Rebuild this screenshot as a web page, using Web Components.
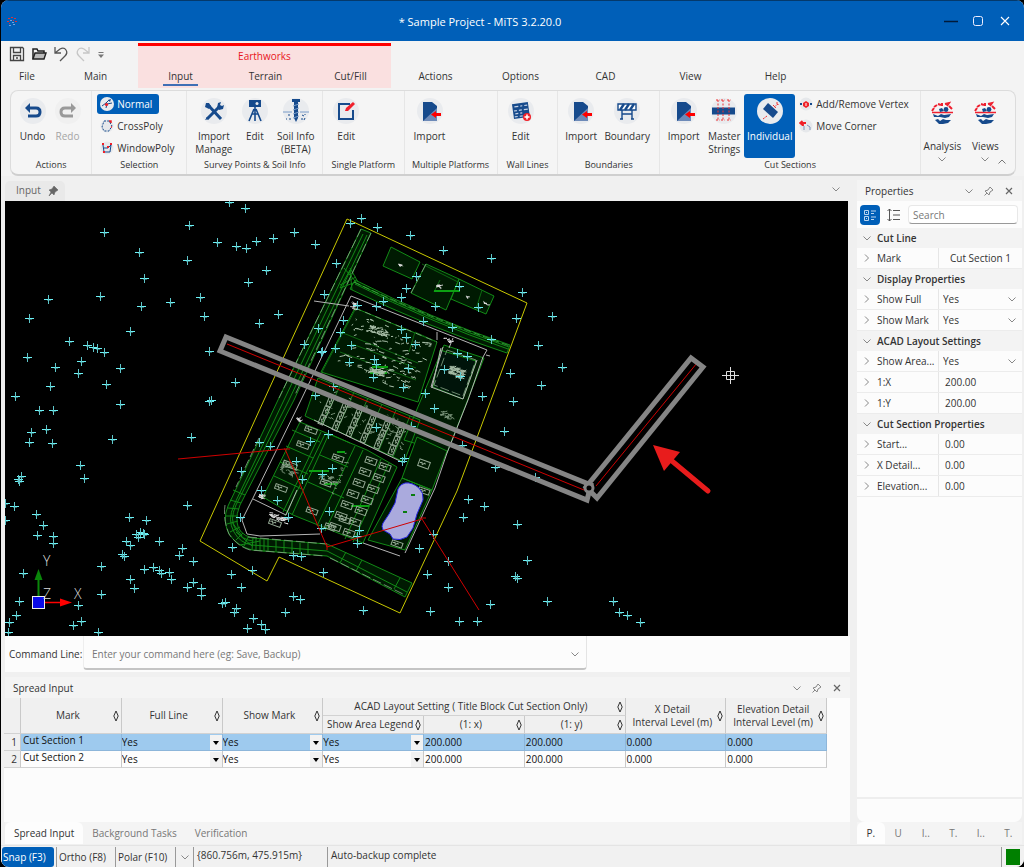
<!DOCTYPE html>
<html lang="en">
<head>
<meta charset="utf-8">
<title>Sample Project - MiTS 3.2.20.0</title>
<style>
html, body { margin: 0; height: 100%; background: #000; }
body { font: 10px/13px "Open Sans", "Noto Sans", sans-serif; color: #333; }
</style>
</head>
<body>
<mits-app></mits-app>
<script>
const BASE = `*,*::before,*::after{box-sizing:border-box}
button,input,select{font:inherit;color:inherit;border:0;background:none;padding:0;margin:0}
button{cursor:default}
a{color:inherit;text-decoration:none}
select{appearance:none;cursor:default}`;

function define(name, css, html, after) {
  customElements.define(name, class extends HTMLElement {
    constructor() {
      super();
      this.attachShadow({ mode: 'open' });
    }
    connectedCallback() {
      if (this.shadowRoot.childNodes.length) return;
      this.shadowRoot.innerHTML = `<style>${BASE}${css}</style>` + (typeof html === 'function' ? html(this) : html);
      if (after) after(this.shadowRoot, this);
    }
  });
}

/* ---------- icons ---------- */
const NAVY = '#164a8c';
const docIcon = `<path d="M6 4h9l5 4v15H6z" fill="${NAVY}"/><path d="M6 23L20 10v13z" fill="#6d8ab8"/><path d="M14 16.5l5-3.5v2h5v3h-5v2z" fill="red"/>`;
const logo = `<g fill="none" stroke="#ee2030"><path d="M3 11l2-3M5 7l3-2M9 4l3 1M13 3v3M16 4l4-1-2 3M20 6l3 3" stroke-width="2"/><path d="M3 12.500h21" stroke-width="1.400"/></g><g fill="${NAVY}"><circle cx="17" cy="9.500" r="2.400"/><path d="M10 9l3-1 2 3-4 1zM4 14l5 2 3-2 3 1 7-1-2 3-4 1-5-1-6 0zM6 20l3-1 2 2 3-2 3 1h5l-3 3-5 1-4 0z"/></g>`;
const ICONS = {
  undo: [26, `<path d="M8 10h8q4 0 4 4t-4 4H8" fill="none" stroke="${NAVY}" stroke-width="3"/><path d="M5 10l5-5v10z" fill="${NAVY}"/>`],
  redo: [26, `<path d="M18 10h-8q-4 0-4 4t4 4h8" fill="none" stroke="#999" stroke-width="3"/><path d="M21 10l-5-5v10z" fill="#999"/>`],
  tools: [26, `<path d="M6 21L18 9M20 21L8 8" stroke="${NAVY}" stroke-width="3" fill="none"/><path d="M5 5l3 0 2 3-2 3-4-2zM16 10l1-5 3-1-1 3 2 1 2-1-1 4-4 1zM4 22l2-3 2 2z" fill="${NAVY}"/>`],
  survey: [26, `<path d="M7 2h12v7H7z" fill="${NAVY}"/><circle cx="15" cy="5.500" r="1.500" fill="#e9ebee"/><path d="M13 9v14M12 11L7 23M14 11l5 12M10 16h6" stroke="${NAVY}" stroke-width="1.600" fill="none"/>`],
  soil: [26, `<path d="M0 14h9M17 14h9" stroke="#7a9cc8"/><path d="M9 1h8v3H9zM11 4h4v16l-2 4-2-4z" fill="${NAVY}"/><path d="M10 8l6-2M10 12l6-2M10 16l6-2M10 20l6-2" stroke="#7a9cc8"/><path d="M5 17h2M3 21h1M7 20v2M19 17l2 1M22 16v1M18 21h2M22 20l-1 2" stroke="${NAVY}"/>`],
  edit: [26, `<path d="M17 6H6v15h14v-9" fill="none" stroke="${NAVY}" stroke-width="2"/><path d="M12 13l1-3 7-6 2 2-7 7z" fill="#f0202c"/>`],
  doc: [26, docIcon],
  wall: [26, `<g transform="rotate(-8 13 13)"><path d="M5 5h16v15H5z" fill="${NAVY}"/><path d="M7 8h4M13 8h2M17 8h3M6 12h3M11 12h3M16 12h4M7 15h3M12 15h2M6 18h3M11 18h3" stroke="#c5d2e6" stroke-width="1.200"/></g><circle cx="19" cy="19" r="4" fill="#f02028"/><path d="M16.500 19h5M19 16.500v5" stroke="#fff" stroke-width="1.500"/>`],
  barrier: [26, `<path d="M4 6h18v6H4z" fill="#fff" stroke="${NAVY}" stroke-width="1.400"/><path d="M6 12l4-6M11 12l4-6M16 12l4-6" stroke="${NAVY}" stroke-width="2.400"/><path d="M8 12v9M18 12v9M8 16h10M6 21h3M17 21h3" stroke="${NAVY}" stroke-width="1.400" fill="none"/>`],
  master: [26, `<path d="M1 9.500h23v7H1z" fill="${NAVY}"/><path d="M7 2v20M12 2v20M18 2v20M5 2h4M10 2h4M16 2h4M5 22h4M10 22h4M16 22h4" stroke="#f03030" stroke-dasharray="2 1.500" fill="none"/>`],
  individual: [26, `<path d="M11 5l10 9-5 6L6 11z" fill="${NAVY}"/><path d="M6 21l4-3M17 9l4-3M16 7l3 3M19 5h2v2" stroke="#f03030" stroke-dasharray="2 1" fill="none"/>`],
  logo: [26, logo],
  normal: [14, `<circle cx="7" cy="7" r="7" fill="#e9ebee"/><path d="M2 9l4-3 3-3M6 11l1-4 5-1" stroke="${NAVY}" fill="none"/><circle cx="6.500" cy="7.500" r="1.600" fill="#f02028"/><path d="M8 3l3-1-1 3z" fill="${NAVY}"/>`],
  cross: [14, `<circle cx="7" cy="7" r="6.500" fill="#e6e8eb"/><path d="M4 2h5l3 5-3 5H4L2 8z" fill="none" stroke="${NAVY}" stroke-dasharray="2 1.200"/><path d="M9 2h2v2M11 8h1" stroke="#f02028" stroke-width="1.500"/>`],
  windowp: [14, `<circle cx="7" cy="7" r="6.500" fill="#e6e8eb"/><path d="M3 4l1 7h6l1-7-3 3H4" fill="none" stroke="${NAVY}"/><path d="M2 3h2M10 3h2M7 6h2M3 11h2" stroke="#f02028" stroke-width="1.800"/>`],
  vertex: [14, `<circle cx="7" cy="7" r="6.500" fill="#e6e8eb"/><path d="M1 7h2M11 7h2" stroke="${NAVY}" stroke-width="2"/><path d="M7 4l3 2v3l-3 2-3-2V6z" fill="#f02028"/><path d="M7 6v3" stroke="#fff"/>`],
  corner: [14, `<circle cx="7" cy="7" r="6.500" fill="#e6e8eb"/><path d="M1 4h6M3.500 2L1 4l2.500 2M4 4v3" stroke="#f02028" stroke-width="1.800" fill="none"/><path d="M5 7v4M8 6l3 2v3" stroke="#8095bb" fill="none"/>`],
  save: [16, `<path d="M1.500 1.500h12l1 1v12h-13zM4.500 1.500v5h7v-5M4.500 14.500v-5h7v5M7 12h2" fill="none" stroke="#444" stroke-width="1.300"/>`],
  open: [16, `<path d="M2 13V3h4l1 2h6v2" fill="none" stroke="#222" stroke-width="1.500"/><path d="M4 7h11l-2 6H2z" fill="#bbb" stroke="#222" stroke-width="1.400"/>`],
  undoThin: [16, `<path d="M2 1v6h6M2 7l5-4q4-2 6 1 2 3-1 6l-5 5" fill="none" stroke="#555" stroke-width="1.300"/>`],
  redoThin: [16, `<path d="M14 1v6H8M14 7L9 3Q5 1 3 4q-2 3 1 6l5 5" fill="none" stroke="#c6c6c6" stroke-width="1.300"/>`],
  more: [8, `<path d="M1.500 1.500h5" stroke="#777"/><path d="M1 3.500h6L4 7z" fill="#777"/>`],
  app: [12, `<g fill="#d8343c"><path d="M2 3h2v1H2zM5 2h2v1H5zM8 3h2v1H8zM1 6h2v1H1zM9 6h2v1H9zM3 8h1v1H3zM7 5h1v1H7z"/></g><g fill="#6fa0dc"><path d="M4 5h2v1H4zM3 10h2v1H3zM7 9h2v1H7zM6 7h2v1H6z"/></g>`],
  chev: [10, `<path d="M1.500 3.500L5 7l3.500-3.500" fill="none" stroke="#888"/>`],
  chevUp: [10, `<path d="M1.500 6.500L5 3l3.500 3.500" fill="none" stroke="#777"/>`],
  chevRight: [10, `<path d="M3 1.500L6.500 5 3 8.500" fill="none" stroke="#888"/>`],
  pin: [12, `<path d="M7 2l3 3-3 2-1 3-4-4 3-1zM4 8l-2.500 2.500" fill="none" stroke="#888"/>`],
  pinned: [12, `<path d="M7 1l4 4-3 2-1 3-2-2-3 3 2-4-2-2 3-1z" fill="#666" stroke="#666" stroke-width=".6"/>`],
  close: [10, `<path d="M2 2l6 6M8 2L2 8" stroke="#666" stroke-width="1.200"/>`],
  sort: [6, `<path d="M3 1L5.200 6 3 11 .800 6z" fill="none" stroke="#333"/>`, 12],
  cat: [14, `<path d="M1.500 2.500h4v4h-4zM1.500 8.500h4v4h-4zM3 4.500h1M3 10.500h1M8 3h5M8 5.500h3M8 9h5M8 11.500h3" fill="none" stroke="#bcd6f0"/>`],
  alpha: [14, `<path d="M2.500 1v12M.500 3l2-2 2 2M.500 11l2 2 2-2M6 2.500h7M6 7h7M6 11.500h7" fill="none" stroke="#555"/>`],
  min: [14, `<path d="M0 7.500h14" stroke="#001a3a" stroke-width="1.500"/>`],
  max: [12, `<rect x="1.500" y="1.500" width="9" height="9" rx="2" fill="none" stroke="#eef"/>`],
  xwin: [12, `<path d="M2 2l8 8M10 2l-8 8" stroke="#fff" stroke-width="1.100"/>`]
};
define('ui-icon', `:host{display:inline-flex;flex:none;line-height:0}svg{display:block}`,
  el => { const [w, body, h] = ICONS[el.getAttribute('name')]; return `<svg width="${w}" height="${h || w}" viewBox="0 0 ${w} ${h || w}" aria-hidden="true">${body}</svg>`; });

/* ---------- title bar ---------- */
define('title-bar', `:host{display:flex;align-items:center;height:41px;background:#005fb8;color:#fff;font-size:11px;border-top:1px solid #04396b}
h1{flex:1;margin:0;font-size:11px;font-weight:400;text-align:center}
.i{width:22px;display:flex;justify-content:center}.c{display:flex;padding-right:6px}
button{width:27px;height:40px;display:grid;place-items:center}`,
`<span class="i"><ui-icon name="app"></ui-icon></span><h1>* Sample Project - MiTS 3.2.20.0</h1>
<div class="c"><button aria-label="Minimize"><ui-icon name="min"></ui-icon></button><button aria-label="Maximize"><ui-icon name="max"></ui-icon></button><button aria-label="Close"><ui-icon name="xwin"></ui-icon></button></div>`);

/* ---------- ribbon ---------- */
define('ribbon-tabs', `:host{display:grid;grid-template-columns:52px repeat(9,minmax(0,85fr)) minmax(0,206fr);grid-template-rows:27px 18px;padding-top:2px;height:49px}
.q{grid-area:1/1/2/3;display:flex;align-items:center;gap:6px;padding:0 0 2px 8px}
.q button{display:block}
.ctx{grid-area:1/3/3/6;background:#fae0e0;border-top:3px solid red;color:#e8141c;text-align:center;padding-top:4px;margin-right:2px}
a{grid-row:2;text-align:center;justify-self:center;padding:0 5px;border-bottom:2px solid transparent;height:16px;line-height:13px;color:#333}
a.on{border-color:#3f6fb5}`,
`<div class="q"><button aria-label="Save"><ui-icon name="save"></ui-icon></button><button aria-label="Open"><ui-icon name="open"></ui-icon></button><button aria-label="Undo"><ui-icon name="undoThin"></ui-icon></button><button aria-label="Redo"><ui-icon name="redoThin"></ui-icon></button><button aria-label="Customize"><ui-icon name="more"></ui-icon></button></div>
<div class="ctx">Earthworks</div>` +
['File', 'Main', 'Input', 'Terrain', 'Cut/Fill', 'Actions', 'Options', 'CAD', 'View', 'Help'].map((t, i) => `<a href="#" style="grid-column:${i + 1}"${t === 'Input' ? ' class="on"' : ''}>${t}</a>`).join(''));

define('ribbon-group', `:host{display:flex;flex-direction:column;min-width:0;border-right:1px solid #e6e6e6;flex:var(--w) 1 0}
.b{flex:1;display:flex;padding:3px 0 0 var(--pad,0px);justify-content:var(--j,flex-start);align-items:flex-start}
.t{text-align:center;height:17px;line-height:14px;font-size:9px;white-space:nowrap}`,
el => `<div class="b"><slot></slot></div><div class="t">${el.getAttribute('label') || ''}</div>`);

define('ribbon-button', `:host{display:block;flex:none;width:var(--bw,41px)}
button{display:flex;flex-direction:column;align-items:center;width:100%;height:64px;border-radius:3px;padding-top:4px;gap:6px}
.c{width:26px;height:26px;border-radius:50%;background:#e9ebee}
span{line-height:13px;white-space:pre-line;text-align:center}
:host([disabled]) button{color:#a5a5a5}
:host([disabled]) .c{background:#f0f0f0}
:host([active]) button{background:#005fb8;color:#fff}
:host([menu]) button{height:80px;padding-top:6px;gap:14px}
:host([menu]) .c{background:none}
:host([menu]) .m{margin-top:-13px}`,
el => `<button${el.hasAttribute('disabled') ? ' disabled' : ''}><ui-icon class="c" name="${el.getAttribute('icon')}"></ui-icon><span>${el.getAttribute('label').replace('|', '\n')}</span>${el.hasAttribute('menu') ? '<ui-icon class="m" name="chev"></ui-icon>' : ''}</button>`);

define('ribbon-item', `:host{display:block}
button{display:flex;align-items:center;gap:3px;height:20px;padding:0 7px 0 3px;border-radius:3px;white-space:nowrap}
:host([active]) button{background:#005fb8;color:#fff}`,
el => `<button><ui-icon name="${el.getAttribute('icon')}"></ui-icon><span>${el.textContent}</span></button>`);

define('ribbon-stack', `:host{display:flex;flex-direction:column;gap:2px;margin-left:1px}`, `<slot></slot>`);

define('ribbon-bar', `:host{display:flex;position:relative;height:86px;margin:0 8px 0 9px;background:#f5f5f5;border:1px solid #dcdcdc;border-bottom:2px solid #cfcfcf;border-radius:8px}
ribbon-group:last-of-type{border-right:0}
.k{position:absolute;right:8px;bottom:4px}`,
`<ribbon-group label="Actions" style="--w:81;--pad:4px"><ribbon-button style="--bw:35px" icon="undo" label="Undo"></ribbon-button><ribbon-button style="--bw:35px" disabled icon="redo" label="Redo"></ribbon-button></ribbon-group>
<ribbon-group label="Selection" style="--w:95;--pad:4px"><ribbon-stack><ribbon-item active icon="normal">Normal</ribbon-item><ribbon-item icon="cross">CrossPoly</ribbon-item><ribbon-item icon="windowp">WindowPoly</ribbon-item></ribbon-stack></ribbon-group>
<ribbon-group label="Survey Points &amp; Soil Info" style="--w:136;--j:center"><ribbon-button icon="tools" label="Import|Manage"></ribbon-button><ribbon-button icon="survey" label="Edit"></ribbon-button><ribbon-button icon="soil" label="Soil Info|(BETA)"></ribbon-button></ribbon-group>
<ribbon-group label="Single Platform" style="--w:81"><ribbon-button style="--bw:46px" icon="edit" label="Edit"></ribbon-button></ribbon-group>
<ribbon-group label="Multiple Platforms" style="--w:93"><ribbon-button style="--bw:50px" icon="doc" label="Import"></ribbon-button></ribbon-group>
<ribbon-group label="Wall Lines" style="--w:60"><ribbon-button style="--bw:46px" icon="wall" label="Edit"></ribbon-button></ribbon-group>
<ribbon-group label="Boundaries" style="--w:102"><ribbon-button style="--bw:46px" icon="doc" label="Import"></ribbon-button><ribbon-button style="--bw:46px" icon="barrier" label="Boundary"></ribbon-button></ribbon-group>
<ribbon-group label="Cut Sections" style="--w:262;--pad:3px"><ribbon-button icon="doc" label="Import"></ribbon-button><ribbon-button style="--bw:40px" icon="master" label="Master|Strings"></ribbon-button><ribbon-button style="--bw:51px" active icon="individual" label="Individual"></ribbon-button><ribbon-stack><ribbon-item icon="vertex">Add/Remove Vertex</ribbon-item><ribbon-item icon="corner">Move Corner</ribbon-item></ribbon-stack></ribbon-group>
<ribbon-group style="--w:95"><ribbon-button style="--bw:43px" menu icon="logo" label="Analysis"></ribbon-button><ribbon-button style="--bw:43px" menu icon="logo" label="Views"></ribbon-button></ribbon-group>
<button class="k" aria-label="Collapse ribbon"><ui-icon name="chevUp"></ui-icon></button>`);

/* ---------- dock header ---------- */
define('dock-header', `:host{display:flex;align-items:center;height:21px;padding:1px 3px 0 8px;background:#f4f4f4}
span{flex:1}button{width:20px;display:grid;place-items:center}`,
el => `<span>${el.getAttribute('label')}</span><button aria-label="Menu"><ui-icon name="chev"></ui-icon></button><button aria-label="Auto hide"><ui-icon name="pin"></ui-icon></button><button aria-label="Close"><ui-icon name="close"></ui-icon></button>`);

/* ---------- site plan ---------- */
const Z = [
  [0, 200, '566,74 311,97 651,125 418,155 561,180 432,235 301,288 145,296 601,291 511,306 424,319 611,349 87,353 390,392 208,424 261,436 279,441 291,444 313,457 628,452 80,472 243,484 165,500 360,503 233,520 319,553 150,558 46,589 361,611 633,599 628,604 160,629 117,631 138,687 92,697 87,727 157,730 337,716 574,712 240,795 253,834 64,828 55,838 57,843 15,910 43,918 15,959 107,943 130,976 110,1004 160,1009 160,1030 386,950 437,961 561,916 419,995 408,1001 428,999 413,1012 433,1001 379,1023 389,1035 476,1024 367,1061 373,1067 545,1045 536,1064 578,1082 304,1098 433,1107 460,1102 478,1111 484,1118 508,1115 513,1137 391,1137 402,1163 578,1147 562,1160 603,1165 603,1186 69,1120 56,1204 304,1181 233,1216 49,1245 26,1266 243,1263 220,1274 24,1297 293,1297'],
  [200, 200, '86,6 135,24 109,137 137,145 168,122 218,114 281,97 346,132 409,190 197,210 145,245 371,283 235,342 176,369 354,385 311,433 104,545 483,54 449,69 530,82 472,314 528,319 550,303 430,359 419,396 452,436 404,444 364,456 366,452 446,485 523,478 527,492 520,531 399,557 345,585'],
  [380, 200, '91,106 190,150 334,175 427,275 517,349 409,355 474,434 545,502 391,520 484,555 305,589 108,228 79,265 62,291 10,303 238,259 166,318 293,322 216,381 332,417 128,363 62,386 77,412 106,432 231,458 262,468 193,507 239,528 84,505 70,561 135,580'],
  [200, 400, '383,103 528,82 178,125 210,137 329,122 289,183 397,205 366,222 305,236 124,212 183,270 232,301 121,352 265,350 387,333 364,385 476,391 470,409 470,429 97,442 279,465 302,468 155,510 94,522 369,515 122,562 74,605 65,610 107,625 102,636 160,653 278,588 301,598 256,635 488,629 142,684 184,672 196,687'],
  [380, 400, '398,3 371,92 163,25 92,78 246,135 73,175 66,184 345,200 464,232 263,296 311,319 250,351 412,372 160,402 116,444 205,482 442,480 141,522 405,527 412,533 205,562 330,613 500,603 151,633 698,603 718,636 741,646 290,662 781,666 237,664']
];
const crosses = Z.flatMap(([ox, oy, s]) => s.split(' ').map(p => { const [x, y] = p.split(',').map(Number); return [Math.round(ox + x / 3), Math.round(oy + y / 3)]; }));
let seed = 7;
const rnd = () => (seed = (seed * 16807) % 2147483647) / 2147483647;
/* small annotation marks spread inside a rotated box */
function marks(ox, oy, w, h, n, size = 4) {
  let d = '';
  for (let i = 0; i < n; i++) {
    const u = rnd() * w, v = rnd() * h;
    const x = ox + u * .93 - v * .34, y = oy + u * .38 + v * .92;
    d += `M${x.toFixed(1)} ${y.toFixed(1)}l${(rnd() * size).toFixed(1)} ${(rnd() * 3 - 1).toFixed(1)}l${(rnd() * 3 - 1).toFixed(1)} ${(rnd() * 2 - 1).toFixed(1)}`;
  }
  return `<path d="${d}"/>`;
}
function tag(x, y, w = 9, h = 5, a = 20) {
  return `<g transform="translate(${x} ${y}) rotate(${a})"><rect x="${-w / 2}" y="${-h / 2}" width="${w}" height="${h}"/><path d="M${-w / 2 + 1} 0l2-1 1 2 2-2 1 1"/></g>`;
}
const tagGrid = (x, y, cols, rows, dx, dy, ex, ey, a, w, h) => { let s = ''; for (let r = 0; r < rows; r++) for (let c = 0; c < cols; c++) s += tag(x + c * dx + r * ex, y + c * dy + r * ey, w, h, a); return s; };

define('site-plan', `:host{display:block;min-height:0;background:#000;overflow:hidden}svg{display:block;width:100%;height:100%}
text{font:300 14px "Open Sans",sans-serif;fill:#ddd}`,
() => `<svg viewBox="5 201 843 435" preserveAspectRatio="xMidYMid slice" role="img" aria-label="Site plan">
<g fill="#001a02" stroke="#128a16">
<path d="M391 247l29 15-8 17-29-13zM426 264l33 15-13 31-35-17zM459 279l35 17-8 18-35-15z"/>
<path d="M355 308L437 342 418 402 321 372zM318 378L420 420 404 462 305 416zM444 345L484 358 447 453 404 440z"/>
<path d="M417 437l30 14-15 39-30-12zM402 478L432 490 405 550 368 540z"/>
<path d="M300 422L367 450 397 467 363 543 293 515 263 497z"/>
<path d="M361 229L278 400 228 506Q222 520 229 534 237 546 252 550L327 556 405 597 412 583 327 544 252 538Q238 534 237 522 236 514 240 505L294 400 371 233z"/>
<path d="M355 280Q430 318 510 345L507 353Q430 328 350 289z"/>
<path d="M363 234L284 400 234 505Q227 520 234 532 240 543 252 545L327 551 407 592M367 235L289 400 236 505Q229 520 236 530 242 540 253 541M355 284Q430 322 508 349M354 282Q430 320 509 347M344 268l12 14-16 6 10-18 2 20M340 285l16-8M350 268l8 14" fill="none"/>
<path d="M352 344l64 24M340 352l76 28M356 308l-34 64M343 333l75 30M409 352l6-20 22 10M422 264l36 18M440 280l-6 12M482 290l-6 19" fill="none" stroke="#0d6511"/>
<path d="M324 392l88 38M340 386l-18 38M354 392l-18 40M368 398l-18 40M382 404l-18 40M396 410l-17 40M410 416l-17 41" fill="none" stroke="#1d7d20"/>
<path d="M292 430l28 12M286 446l27 12M280 462l28 12M274 476l28 13M325 434l-40 82M321 432l-38 80M328 436l-36 79M330 434l20 9M320 455l28 12M308 482l36 16M355 446l-38 80M363 450l-38 81M381 459l-36 80M389 463l-36 79" fill="none"/>
<path d="M309 471h20M351 506h18M324 484h14M370 373h17M337 452h8M434 291h26M372 367h16" stroke="#0ca012" stroke-width="2" fill="none"/>
<path d="M233 490l12 5M230 500l11 3M228 508l11 1M226 516l11 0M227 524l11-3M230 532l10-5M236 540l7-7M244 546l4-9M252 550l1-12M256 551v-12M260 551v-12M264 552v-13M268 551v-12M276 552v-12M284 553v-12M292 553v-11M300 554v-11M308 555v-12M236 532l16 14M232 522l10 14M240 545l20-4M340 563l6-11M356 571l6-11M394 589l6-11" fill="none"/>
<path d="M440 350l36 11-13 38-30-12z" fill="#00140a"/>
</g>
<g fill="none" stroke="#87a987" stroke-opacity=".8">
<path d="M361 229L279 398M371 233L295 395M259 438L236 487M225 505Q223 520 229 534 237 546 250 550L325 556M248 537L327 544M330 558L405 595M426 264l-15 29M447 350l29 10-13 36-29-11z" stroke-dasharray="9 3"/>
<path d="M354 282Q430 318 510 346" stroke="#3fb043" stroke-dasharray="7 3"/>
<path d="M355 308L437 342" stroke-dasharray="6 5"/>
</g>
<g fill="none" stroke="#a9bfa9">
<g>${marks(356, 312, 80, 58, 110, 5)}${marks(370, 325, 18, 6, 40, 5)}${marks(370, 366, 14, 6, 40, 5)}${marks(450, 365, 14, 9, 60, 5)}</g>
<g stroke="#7a937a">${marks(325, 388, 92, 30, 90, 3)}${marks(440, 410, 12, 6, 22)}${marks(345, 452, 4, 60, 12)}${marks(282, 462, 16, 9, 26)}${marks(320, 472, 20, 7, 24)}</g>
<g stroke="#96ab96">${tagGrid(330, 402, 6, 3, 14, 6, -4, 9, 112, 9, 5)}
${tagGrid(371, 461, 2, 7, 14, 6, -6, 11, 20, 11, 6)}
${tag(311, 430, 12)}${tag(303, 445, 12)}${tag(290, 465, 14)}${tag(281, 488, 12)}${tag(338, 458, 11)}${tag(326, 483, 11)}${tag(312, 511, 11)}${tag(345, 520, 11)}${tag(330, 527, 10)}${tag(424, 464, 11, 7)}${tag(424, 491, 11)}${tag(397, 544, 11)}${tag(275, 523, 12)}</g>
<g stroke="#ddd">${marks(268, 512, 20, 4, 26, 4)}${marks(443, 338, 8, 2, 8)}${marks(398, 263, 3, 2, 5)}${marks(436, 285, 3, 2, 6)}${marks(466, 295, 3, 2, 4)}${marks(483, 301, 4, 2, 5)}${marks(259, 494, 4, 3, 12)}${marks(351, 302, 5, 6, 14)}${marks(296, 418, 5, 2, 8)}</g>
</g>
<g fill="none" stroke="#b4b4b4">
<path d="M314 301l35 5M351 296L487 350 483 357 468 400 447 453 435 488 405 553M351 296L301 400 253 498 242 520 247 534 260 536 320 534M253 499l33 16 11-25M314 420L400 461M363 543l37 13M486 355l4 1M437 332v8M453 338l-4 10M443 347L431 387 463 399 477 360M441 348l-9 40"/>
</g>
<path d="M347 219L527 303 491 400 457 491 400 613 279 557 267 581 200 541 264 400z" fill="none" stroke="#c8c800"/>
<path d="M405 483Q412 482 419 488 424 493 423 500L417 514 413 528 407 537Q400 541 393 539L390 534 383 530Q381 526 383 523L389 514 395 503 398 489Q400 484 405 483z" fill="#aaaadd" stroke="#2525e0"/>
<path d="M411 495h4M403 512h4" stroke="#0a7d10" stroke-width="2"/>
<path d="${crosses.map(([x, y]) => `M${x - 4} ${y + .5}h9`).join('')}" stroke="#6df2f6" fill="none"/>
<path d="${crosses.map(([x, y]) => `M${x - 1} ${y + 1.5}h4`).join('')}" stroke="#6df2f6" stroke-opacity=".4" fill="none"/>
<path d="${crosses.map(([x, y]) => `M${x + .5} ${y - 4}v9`).join('')}" stroke="#5fc6ca" fill="none"/>
<path d="M178 459L285 449 327 547 422 519 479 610M227 344L584 490M596 486L697 363M284 449h6M420 518h6M327 544v6" stroke="#d00000" fill="none"/>
<path d="M226 337L591 485 587 500 220 351zM586 487L691 358 703 367 597 498z" fill="none" stroke="#858585" stroke-width="5"/>
<circle cx="589" cy="488" r="4" fill="#000" stroke="#858585" stroke-width="3"/>
<path d="M708 491L672 461" stroke="#e81c1c" stroke-width="5" stroke-linecap="round"/><path d="M653 445l27 7-16 19z" fill="#e81c1c"/>
<path d="M722 375.500h17M730.500 367v17M726.500 371.500h8v8h-8z" stroke="#ddd" fill="none"/>
<path d="M38.500 596V577" stroke="#0a860a" stroke-width="2"/><path d="M34.500 580l4-11 4 11z" fill="#0a860a"/>
<path d="M44 602.500h18" stroke="red" stroke-width="1.500"/><path d="M60 598.500l12 4-12 4z" fill="red"/>
<rect x="32.500" y="596.500" width="12" height="12" fill="#0a0ae8" stroke="#eee"/>
<text x="43" y="566">Y</text><text x="43" y="599">Z</text><text x="74" y="599">X</text>
</svg>`);

/* ---------- command line ---------- */
define('command-line', `:host{display:flex;height:36px;background:#fcfcfc;padding:0 0 2px 4px;align-items:stretch}
label{width:74px;align-self:center;white-space:nowrap;padding-top:3px}
.f{flex:0 1 504px;display:flex;align-items:center;padding-top:3px;border-left:1px solid #eee;border-right:1px solid #e4e4e4;border-bottom:2px solid #c4c4c4;border-radius:0 0 4px 4px}
input{flex:1;height:28px;padding-left:8px;outline:0}input::placeholder{color:#777;opacity:1}
button{width:22px;display:grid;place-items:center}`,
`<label for="c">Command Line:</label><div class="f"><input id="c" placeholder="Enter your command here (eg: Save, Backup)"><button aria-label="History"><ui-icon name="chev"></ui-icon></button></div>`);

/* ---------- spread table ---------- */
const S = '<ui-icon name="sort"></ui-icon>';
const sel = n => `<td class="s"><select aria-label="${n}"><option>Yes</option><option>No</option></select></td>`;
define('spread-table', `:host{display:block;background:#fcfcfc;height:124px;overflow:hidden;padding-right:23px;margin-left:-1px}
table{border-collapse:separate;border-spacing:0;table-layout:fixed;width:100%}
th,td{padding:0;border-right:1px solid #c9c9c9;border-bottom:1px solid #d2d2d2;font-weight:400;height:17px;line-height:13px}
thead th{background:#f0f0f0;text-align:center;height:18px}
thead th div{display:flex;align-items:center;justify-content:center;padding:0 2px}
thead th span{flex:1;white-space:nowrap}
tbody th{background:#f0f0f0;text-align:right;padding-right:3px}
td{background:#fdfdfd;color:#111;white-space:nowrap;padding-left:1px}
td.m{padding:0 0 3px 2px}
tr.on td{background:#9ecaee;border-color:#8db6da}
td.s{padding:0;position:relative}
select{width:100%;height:16px;display:block;position:relative}
td.s::after{content:"";position:absolute;right:0;top:1px;width:12px;height:15px;background:#f2f2f2}
td.s::before{content:"";position:absolute;z-index:1;right:3px;top:7px;border:3px solid transparent;border-top:4px solid #000;border-bottom:0}`,
`<table><colgroup><col style="width:17px"><col span="8"></colgroup><thead>
<tr><th rowspan="2"></th><th rowspan="2"><div><span>Mark</span>${S}</div></th><th rowspan="2"><div><span>Full Line</span>${S}</div></th><th rowspan="2"><div><span>Show Mark</span>${S}</div></th><th colspan="3"><div><span>ACAD Layout Setting ( Title Block Cut Section Only)</span>${S}</div></th><th rowspan="2"><div><span>X Detail<br>Interval Level (m)</span>${S}</div></th><th rowspan="2"><div><span>Elevation Detail<br>Interval Level (m)</span>${S}</div></th></tr>
<tr><th><div><span>Show Area Legend</span>${S}</div></th><th><div><span>(1: x)</span>${S}</div></th><th><div><span>(1: y)</span>${S}</div></th></tr></thead><tbody>` +
[1, 2].map(i => `<tr class="${i === 1 ? 'on' : ''}"><th>${i}</th><td class="m">Cut Section ${i}</td>${sel('Full line')}${sel('Show mark')}${sel('Show area legend')}<td>200.000</td><td>200.000</td><td>0.000</td><td>0.000</td></tr>`).join('') + `</tbody></table>`);

define('tab-strip', `:host{display:flex;height:22px;background:#f4f4f4;color:#777}
a{flex:var(--tf,none);padding:0 var(--tp,8px);text-align:center;line-height:23px;white-space:nowrap}
a:first-of-type{background:#fdfdfd;color:#333;border-radius:6px 6px 0 0}`,
el => el.getAttribute('tabs').split('|').map(t => `<a href="#">${t}</a>`).join(''));

/* ---------- property grid ---------- */
const PROPS = [['Cut Line'], ['Mark', 'Cut Section 1', 'r'], ['Display Properties'], ['Show Full', 'Yes', 's'], ['Show Mark', 'Yes', 's'], ['ACAD Layout Settings'], ['Show Area...', 'Yes', 's'], ['1:X', '200.00'], ['1:Y', '200.00'], ['Cut Section Properties'], ['Start...', '0.00'], ['X Detail...', '0.00'], ['Elevation...', '0.00']];
define('property-grid', `:host{display:flex;flex-direction:column;background:#fcfcfc;min-height:0;border-radius:0 0 8px 8px}
.bar{display:flex;align-items:center;height:27px;padding:0 4px 0 3px}
.bar button{width:20px;height:20px;display:grid;place-items:center;border-radius:4px;margin-right:4px}
.bar button.on{background:#005fb8}
.bar input{flex:1;min-width:0;height:19px;padding-left:4px;border:1px solid #e8e8e8;border-bottom-color:#999;border-radius:4px;background:#fff}
input::placeholder{color:#777;opacity:1}
.cat{display:flex;align-items:center;height:20px;background:#f3f3f3;font-weight:600;color:#333}
.row{display:grid;grid-template-columns:20px 61px minmax(0,1fr);align-items:center;height:21px;border-bottom:1px solid #ececec}
.cat ui-icon,.row>ui-icon{width:10px;margin:0 5px}
label{white-space:nowrap}
.v{display:flex;align-items:center;border-left:1px solid #e6e6e6;height:20px;position:relative}
.v select,.v input{width:100%;min-width:0;padding-left:4px;height:20px;outline:0}
.v input{padding-left:6px}.v input.r{padding-left:11px}
.v ui-icon{position:absolute;right:5px}
.foot{margin-top:auto;height:25px;border-top:2px solid #eee}`,
() => `<div class="bar"><button class="on" aria-label="Categorized"><ui-icon name="cat"></ui-icon></button><button aria-label="Alphabetical"><ui-icon name="alpha"></ui-icon></button><input aria-label="Search" placeholder="Search"></div>` +
PROPS.map(([n, v, k], i) => v === undefined ? `<div class="cat"><ui-icon name="chev"></ui-icon>${n}</div>` :
`<div class="row"><ui-icon name="chevRight"></ui-icon><label for="p${i}">${n}</label><div class="v">${k === 's' ? `<select id="p${i}"><option>${v}</option><option>No</option></select><ui-icon name="chev"></ui-icon>` : `<input id="p${i}" class="${k || ''}" value="${v}">`}</div></div>`).join('') + `<div class="foot"></div>`);

/* ---------- status bar ---------- */
define('status-bar', `:host{display:flex;align-items:center;height:22px;background:#f1f1f1;padding:0 4px 0 1px;border-top:1px solid #e4e4e4}
button,span{height:20px;line-height:20px;white-space:nowrap;text-align:left}
button.on{background:#005fb8;color:#fff;width:52px;border-radius:3px;padding-left:1px}
.o,.d,.co,.m{border-left:1px solid #999;padding-left:2px}
.o{width:59px}.o:nth-of-type(2){margin-left:2px}.p{width:60px}.d{width:18px;padding:0;display:grid;place-items:center}
.co{width:134px}.co,.m{padding-left:3px;line-height:17px}.m{flex:1}
i{width:14px;height:16px;background:#008000}.g{border-left:1px solid #999;padding:2px 0 0 4px;display:flex}`,
`<button class="on">Snap (F3)</button><button class="o">Ortho (F8)</button><button class="o p">Polar (F10)</button><button class="d" aria-label="Options"><ui-icon name="chev"></ui-icon></button><span class="co">{860.756m, 475.915m}</span><span class="m">Auto-backup complete</span><span class="g"><i></i></span>`);

/* ---------- application shell ---------- */
define('mits-app', `:host{display:flex;flex-direction:column;min-height:100vh;height:100vh;padding-left:1px;background:#000}
.win{flex:1;min-height:0;display:flex;flex-direction:column;background:#f3f3f3;border-radius:8px;overflow:hidden}
.win>*{flex:none}
.win>main{flex:1 1 0;min-height:0;display:grid;grid-template-columns:minmax(0,1fr) 165px;gap:7px;padding:4px 2px 1px 4px;background:#f0f0f0}
.l,.r{display:flex;flex-direction:column;min-width:0;min-height:0}
.l>*,.r>*{flex:none}
.docs{display:flex;height:21px;align-items:center;justify-content:space-between;padding-right:9px}
.docs a{display:flex;align-items:center;gap:6px;height:20px;padding:0 6px 0 11px;background:#e9e9e9;border-radius:5px 5px 0 0;color:#666}
.l>site-plan{flex:1 1 0;margin-right:2px}
.gap{height:5px}
.r>property-grid{flex:1 1 0}`,
`<div class="win"><title-bar></title-bar><ribbon-tabs></ribbon-tabs><ribbon-bar></ribbon-bar>
<main><section class="l"><div class="docs"><a href="#">Input <ui-icon name="pinned"></ui-icon></a><button aria-label="Documents"><ui-icon name="chev"></ui-icon></button></div>
<site-plan></site-plan><command-line></command-line><div class="gap"></div><dock-header label="Spread Input"></dock-header><spread-table></spread-table><tab-strip tabs="Spread Input|Background Tasks|Verification" style="--tp:9px"></tab-strip></section>
<section class="r"><dock-header label="Properties"></dock-header><property-grid></property-grid><tab-strip tabs="P.|U|I..|T.|I..|T." style="--tf:1;--tp:0px"></tab-strip></section></main>
<status-bar></status-bar></div>`);
</script>
</body>
</html>
